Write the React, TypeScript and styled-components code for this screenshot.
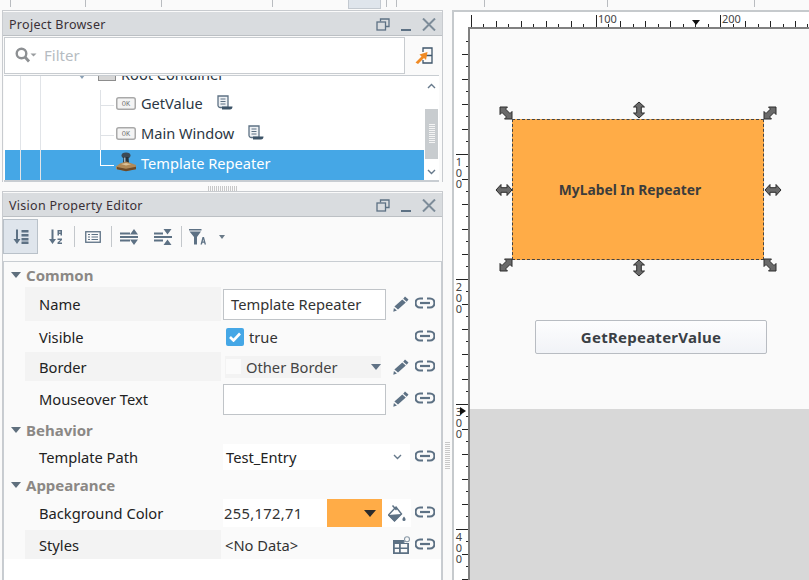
import { ReactNode } from 'react';
import styled, { createGlobalStyle } from 'styled-components';

const GlobalStyle = createGlobalStyle`
  html, body { margin: 0; padding: 0; background: #fafafa; }
  body { font-family: "Noto Sans", "Open Sans", sans-serif; color: #222; }
  * { box-sizing: border-box; }
`;

const SLATE = '#5d7184';

// ---- icons ----
const LinkIcon = () => (
  <svg width="20" height="12" viewBox="0 0 20 12" fill="none" stroke={SLATE} strokeWidth="2.200">
    <path d="M8 1.500H5a4.500 4.500 0 0 0 0 9h3" />
    <path d="M12 1.500h3a4.500 4.500 0 0 1 0 9h-3" />
    <path d="M5 6h10" />
  </svg>
);

const PencilIcon = () => (
  <svg width="16" height="16" viewBox="0 0 16 16" fill={SLATE}>
    <path d="M12 0.500l3.500 3-1.800 2.200-3.500-3zM9.300 3.600l3.500 3-7.800 7-3.600-3z" />
    <path d="M0.300 15.700l.6-3.800 3 2.500z" />
  </svg>
);

const OkIcon = () => (
  <svg width="20" height="13" viewBox="0 0 20 13">
    <rect x="0.750" y="0.750" width="18.500" height="11.500" rx="2" fill="#f4f4f4" stroke="#a9a9a9" strokeWidth="1.500" />
    <text x="10" y="9.300" textAnchor="middle" fontSize="7" fontFamily="Liberation Mono" fill="#777">OK</text>
  </svg>
);

const ScriptIcon = () => (
  <svg width="16" height="16" viewBox="0 0 16 16">
    <path d="M1 1h10v11.500H3.500A2.200 2.200 0 0 1 1 10.500z" fill="#eef1f4" stroke={SLATE} strokeWidth="1.300" />
    <path d="M3.500 4h5M3.500 6.500h5M3.500 9h5" stroke={SLATE} strokeWidth="1" />
    <path d="M5 11.500h10.500c0 2-1 3-2.500 3H5z" fill="#3d5468" />
  </svg>
);

const StampIcon = () => (
  <svg width="21" height="22" viewBox="0 0 21 22">
    <ellipse cx="10" cy="3.500" rx="4.500" ry="3" fill="#3c4a55" />
    <path d="M7.500 5h5l.5 6h-6z" fill="#27323a" />
    <path d="M8 5.500h1.500v5H8z" fill="#9fb1bd" />
    <path d="M4 11.500l6-2 6 2 4 1.500v4l-10 2-10-2v-2.500z" fill="#b08a58" />
    <path d="M1 15l9 1.800 10-2v2.400l-10 2-9-2z" fill="#6b4a28" />
    <path d="M5 12l5-1 5 1.200-5 1.300z" fill="#dcc39a" />
  </svg>
);

const FloatIcon = () => (
  <svg width="14" height="13" viewBox="0 0 14 13" fill="none" stroke={SLATE} strokeWidth="1.300">
    <rect x="1" y="4" width="8.500" height="8" />
    <path d="M4.500 3.500V1h8.500v7.500h-3" />
  </svg>
);

const CloseIcon = () => (
  <svg width="14" height="13" viewBox="0 0 14 13" stroke="#7d8c99" strokeWidth="2">
    <path d="M1 0.500l12 12M13 0.500l-12 12" />
  </svg>
);

const SearchIcon = () => (
  <svg width="22" height="16" viewBox="0 0 22 16" fill="none">
    <circle cx="6.500" cy="6.500" r="4.800" stroke="#8d9093" strokeWidth="2.400" />
    <path d="M10 10l4 4.500" stroke="#8d9093" strokeWidth="2.800" />
    <path d="M15.500 6.500h6l-3 3z" fill="#9a9da0" />
  </svg>
);

const LocateIcon = () => (
  <svg width="18" height="18" viewBox="0 0 18 18" fill="none">
    <path d="M8 5V1h9v15H8v-3M11 8.500h6" stroke="#3f566b" strokeWidth="1.300" />
    <path d="M0.500 15.500L6.500 9.500l-2-2L12.500 5l-1.500 8-2-2-6 6z" fill="#f08a24" />
  </svg>
);

const SortOrderIcon = () => (
  <svg width="16" height="16" viewBox="0 0 16 16" fill={SLATE}>
    <path d="M3 0.500h2V10h2.500l-3.500 5-3.500-5H3z" />
    <path d="M8.500 1h7v2.500h-7zM8.500 5h7v2.500h-7zM8.500 9h7v2.500h-7zM8.500 12.500h7v2.500h-7z" />
  </svg>
);

const SortAlphaIcon = () => (
  <svg width="14" height="16" viewBox="0 0 14 16" fill={SLATE}>
    <path d="M2.500 0.500h2V10H7l-3.500 5L0 10h2.500z" />
    <path d="M8.500 1h4.500v5.500h-1.500V5h-1.500v1.500H8.500zM10 2.400v1.200h1.500V2.400zM8.500 9.500H13v1.500l-2.800 2.500H13V15H8.500v-1.500l2.800-2.500H8.500z" />
  </svg>
);

const DetailsIcon = () => (
  <svg width="16" height="12" viewBox="0 0 16 12" fill="none" stroke={SLATE}>
    <rect x="0.750" y="0.750" width="14.500" height="10.500" strokeWidth="1.300" />
    <path d="M3 3.500h2M3 6h2M3 8.500h2M6.500 3.500H13M6.500 6H13M6.500 8.500H13" strokeWidth="1.200" />
  </svg>
);

const ExpandIcon = () => (
  <svg width="18" height="16" viewBox="0 0 18 16" fill={SLATE}>
    <path d="M0 3.500h10v2H0zM0 7h18v2H0zM0 10.500h10v2H0z" />
    <path d="M14 0l4 5.500h-8zM14 16l-4-5.500h8z" />
  </svg>
);

const CollapseIcon = () => (
  <svg width="18" height="16" viewBox="0 0 18 16" fill={SLATE}>
    <path d="M0 3.500h9v2H0zM0 7h18v2H0zM0 10.500h9v2H0z" />
    <path d="M9.500 0h8l-4 5.500zM13.500 10.500l4 5.500h-8z" />
  </svg>
);

const FilterAlphaIcon = () => (
  <svg width="17" height="16" viewBox="0 0 17 16" fill={SLATE}>
    <path d="M0 0h12.500v1.500H0zM0.500 2.500h11.500L8 8v7.500H5V8z" />
    <path d="M13.500 8h1.500l2 7.500h-1.400l-.4-1.700h-1.800l-.4 1.700H11.500zM13.700 12.600h1.100l-.5-2.400z" />
  </svg>
);

const BucketIcon = () => (
  <svg width="18" height="17" viewBox="0 0 18 17" fill="none">
    <path d="M8 2l5.500 7-7 7L0.500 10z" stroke={SLATE} strokeWidth="1.400" />
    <path d="M0 10l13.500-1-7 7.500z" fill={SLATE} />
    <path d="M4.500 0.500L8.500 5" stroke={SLATE} strokeWidth="1.500" />
    <path d="M16 11.500c.8 1.200 1.600 2 1.600 2.900a1.600 1.600 0 0 1-3.200 0c0-.9.800-1.700 1.600-2.900z" fill={SLATE} />
  </svg>
);

const DatasetIcon = () => (
  <svg width="18" height="18" viewBox="0 0 18 18" fill={SLATE}>
    <path d="M0 4h11v3h5v11H0zM1.800 8v3.500h4.200V8zm6 0v3.500h6.400V8zM1.800 13v3.300h4.200V13zm6 0v3.300h6.400V13z" fillRule="evenodd" />
    <circle cx="14" cy="3.200" r="2.500" fill="#fafafa" stroke="#8a99a7" strokeWidth="1.100" />
    <path d="M12.200 5l-1.500 1.500" stroke="#8a99a7" strokeWidth="1.100" />
  </svg>
);

const Chevron = ({ up }: { up?: boolean }) => (
  <svg width="9" height="6" viewBox="0 0 9 6" fill="none" stroke="#66798b" strokeWidth="1.400">
    <path d={up ? 'M1 5l3.500-3.500L8 5' : 'M1 1l3.500 3.500L8 1'} />
  </svg>
);

const Caret = styled.span<{ $size?: number; $color?: string }>`
  display: inline-block;
  flex: none;
  width: 0;
  height: 0;
  border-left: ${(p) => p.$size ?? 5}px solid transparent;
  border-right: ${(p) => p.$size ?? 5}px solid transparent;
  border-top: ${(p) => (p.$size ?? 5) + 1}px solid ${(p) => p.$color ?? SLATE};
`;

// handles around the selected component
const Handle = ({ kind, x, y }: { kind: 'h' | 'v' | 'd1' | 'd2'; x: number; y: number }) => {
  const straight = kind === 'h' || kind === 'v';
  return (
    <HandleBox $x={x} $y={y}>
      <svg width="18" height="18" viewBox="-9 -9 18 18">
        {straight ? (
          <path
            d="M-8 0L-3 -5.500V-2.300H3V-5.500L8 0 3 5.500V2.300H-3V5.500z"
            fill="#6a6a6a"
            stroke="#2c2c2c"
            strokeWidth="1"
            transform={kind === 'v' ? 'rotate(90)' : undefined}
          />
        ) : (
          <path
            d="M-6 -6H1.500L-0.500 -4 4 0.500 6 -1.500V6H-1.500L0.500 4 -4 -0.500 -6 1.500z"
            fill="#6a6a6a"
            stroke="#2c2c2c"
            strokeWidth="1"
            transform={kind === 'd2' ? 'rotate(90)' : undefined}
          />
        )}
      </svg>
    </HandleBox>
  );
};

// ---- rulers ----
const Hruler = () => {
  const ticks = [];
  for (let k = -10; k < 28; k++) {
    const x = 142 + k * 12.470;
    if (x < 16) continue;
    const major = k % 10 === 0;
    const long = k % 2 === 0;
    ticks.push(<path key={k} d={`M${x} ${major ? 1 : long ? 7 : 10}V13`} stroke="#222" strokeWidth="1" shapeRendering="crispEdges" />);
  }
  return (
    <RulerTop width="355" height="13" viewBox="0 0 355 13">
      {ticks}
      <text x="144" y="9" fontSize="11" fontFamily="Noto Sans" fill="#444">100</text>
      <text x="268" y="9" fontSize="11" fontFamily="Noto Sans" fill="#444">200</text>
      <path d="M238 6h8l-4 5z" fill="#111" />
    </RulerTop>
  );
};

const Vruler = () => {
  const ticks = [];
  for (let k = 1; k < 46; k++) {
    const y = k * 12.500 + 2.300;
    const major = k % 10 === 0;
    const long = k % 2 === 0;
    ticks.push(<path key={k} d={`M${major ? 2 : long ? 8 : 12} ${y}H14`} stroke="#222" strokeWidth="1" shapeRendering="crispEdges" />);
  }
  return (
    <RulerSide width="14" height="553" viewBox="0 0 14 553">
      {ticks}
      {[['1', 127], ['2', 252], ['3', 377], ['4', 502]].map(([d, y]) => (
        <text key={d} textAnchor="middle" fontSize="11" fontFamily="Noto Sans" fill="#444">
          <tspan x="5" y={(y as number) + 11.500}>{d}</tspan>
          <tspan x="5" y={(y as number) + 22.500}>0</tspan>
          <tspan x="5" y={(y as number) + 34}>0</tspan>
        </text>
      ))}
      <path d="M6 380l6 4-6 4z" fill="#111" />
    </RulerSide>
  );
};

// ---- pieces ----
const DockTitle = ({ children }: { children: ReactNode }) => (
  <DockHeader>
    <DockName>{children}</DockName>
    <DockButtons>
      <FloatIcon />
      <MinBar />
      <CloseIcon />
    </DockButtons>
  </DockHeader>
);

const TreeRow = ({ icon, label, script, selected }: { icon: ReactNode; label: string; script?: boolean; selected?: boolean }) => (
  <TreeItem $selected={selected}>
    <Stub $selected={selected} />
    <TreeGlyph>{icon}</TreeGlyph>
    <TreeLabel $selected={selected}>{label}</TreeLabel>
    {script && <ScriptIcon />}
  </TreeItem>
);

const Section = ({ title, height, lift }: { title: string; height: number; lift?: number }) => (
  <SectionRow $h={height} $lift={lift}>
    <Caret $size={5} $color="#5f6f7d" />
    <SectionName>{title}</SectionName>
  </SectionRow>
);

const Prop = ({ name, h, shaded, gap, children, edit, tool }: { name: string; h: number; shaded?: boolean; gap?: number; children?: ReactNode; edit?: boolean; tool?: ReactNode }) => (
  <PropRow $h={h} $gap={gap}>
    <PropName $shaded={shaded}>{name}</PropName>
    <PropValue>{children}</PropValue>
    <PropTool>{edit ? <PencilIcon /> : tool}</PropTool>
    <PropLink><LinkIcon /></PropLink>
  </PropRow>
);

export default function App() {
  return (
    <Page>
      <GlobalStyle />
      <TopStrip>
        <TopTick $w={11} /><TopTick $w={75} /><TopTick $w={76} /><TopTick $w={111} />
        <TopActive />
        <TopTick $w={6} /><TopTick $w={10} /><TopTick $w={88} /><TopTick $w={123} /><TopTick $w={147} />
      </TopStrip>
      <Body>
        <LeftColumn>
          <BrowserPanel>
            <DockTitle>Project Browser</DockTitle>
            <FilterRow>
              <FilterBox>
                <SearchIcon />
                <FilterText>Filter</FilterText>
              </FilterBox>
              <LocateSlot><LocateIcon /></LocateSlot>
            </FilterRow>
            <TreeFrame>
              <TreeRows>
                <GuideLine $x={15} />
                <GuideLine $x={35} />
                <RootRow>
                  <RootCaret $size={3} $color="#8aa0b4" />
                  <RootBox />
                  <RootLabel>Root Container</RootLabel>
                </RootRow>
                <TreeRow icon={<OkIcon />} label="GetValue" script />
                <TreeRow icon={<OkIcon />} label="Main Window" script />
                <TreeRow icon={<StampIcon />} label="Template Repeater" selected />
              </TreeRows>
              <ScrollBar>
                <ScrollArrow $h={20}><Chevron up /></ScrollArrow>
                <ScrollTrack><ScrollThumb><ThumbGrip /></ScrollThumb></ScrollTrack>
                <ScrollArrow $h={16}><Chevron /></ScrollArrow>
              </ScrollBar>
            </TreeFrame>
          </BrowserPanel>
          <HSplit><HGrip /></HSplit>
          <EditorPanel>
            <DockTitle>Vision Property Editor</DockTitle>
            <Toolbar>
              <ToolButton $active $w={35}><SortOrderIcon /></ToolButton>
              <ToolButton $w={35}><SortAlphaIcon /></ToolButton>
              <ToolSep />
              <ToolButton $w={35}><DetailsIcon /></ToolButton>
              <ToolSep />
              <ToolButton $w={34}><ExpandIcon /></ToolButton>
              <ToolButton $w={34}><CollapseIcon /></ToolButton>
              <ToolSep />
              <ToolButton $w={30}><FilterAlphaIcon /></ToolButton>
              <ToolButton $w={20}><Caret $size={3} $color="#6a7a88" /></ToolButton>
            </Toolbar>
            <PropTable>
              <Section title="Common" height={25} />
              <Prop name="Name" h={34} shaded edit>
                <TextField $w={163} $h={31}>Template Repeater</TextField>
              </Prop>
              <Prop name="Visible" h={31}>
                <CheckWrap>
                  <CheckBox>
                    <svg width="12" height="10" viewBox="0 0 12 10" fill="none" stroke="#fff" strokeWidth="2.600"><path d="M1 5l3.500 3.500L11 1.500" /></svg>
                  </CheckBox>
                  true
                </CheckWrap>
              </Prop>
              <Prop name="Border" h={29} shaded edit>
                <BorderSelect>
                  <Swatch />
                  <BorderText>Other Border</BorderText>
                  <Caret $size={5} $color="#5f7184" />
                </BorderSelect>
              </Prop>
              <Prop name="Mouseover Text" h={36} edit>
                <TextField $w={163} $h={31} />
              </Prop>
              <Section title="Behavior" height={27} lift={2} />
              <Prop name="Template Path" h={26}>
                <PathSelect>
                  Test_Entry
                  <Chevron />
                </PathSelect>
              </Prop>
              <Section title="Appearance" height={29} />
              <Prop name="Background Color" h={28}>
                <ColorField>
                  <ColorText>255,172,71</ColorText>
                  <ColorChip><Caret $size={6} $color="#2b2b2b" /></ColorChip>
                  <BucketSlot><BucketIcon /></BucketSlot>
                </ColorField>
              </Prop>
              <Prop name="Styles" h={29} gap={3} shaded tool={<ToolShift><DatasetIcon /></ToolShift>}>
                <NoData>&lt;No Data&gt;</NoData>
              </Prop>
              <TableRest />
            </PropTable>
          </EditorPanel>
        </LeftColumn>
        <VSplit><VGrip /></VSplit>
        <DesignerPanel>
          <Hruler />
          <DesignerBody>
            <Vruler />
            <Stage>
              <Design>
                <Repeater>
                  <RepeaterLabel>MyLabel In Repeater</RepeaterLabel>
                </Repeater>
                <Handle kind="d1" x={27} y={75} />
                <Handle kind="v" x={160} y={72} />
                <Handle kind="d2" x={291} y={75} />
                <Handle kind="h" x={25} y={152} />
                <Handle kind="h" x={294} y={152} />
                <Handle kind="d2" x={27} y={227} />
                <Handle kind="v" x={160} y={230} />
                <Handle kind="d1" x={291} y={227} />
                <ActionButton>GetRepeaterValue</ActionButton>
              </Design>
              <Outside />
            </Stage>
          </DesignerBody>
        </DesignerPanel>
      </Body>
    </Page>
  );
}

// ---- styles ----
const Page = styled.div`
  width: 809px;
  height: 580px;
  overflow: hidden;
  display: flex;
  flex-direction: column;
  background: #fafafa;
`;
const TopStrip = styled.div`
  height: 10px;
  flex: none;
  display: flex;
  align-items: flex-start;
`;
const TopTick = styled.div<{ $w: number }>`
  width: ${(p) => p.$w}px;
  height: 7px;
  border-right: 1px solid #b9bcc0;
`;
const TopActive = styled.div`
  width: 33px;
  height: 9px;
  margin-left: 75px;
  background: #dfe5ec;
  border: 1px solid #c3c9d0;
  border-top: 0;
`;
const Body = styled.div`
  flex: 1;
  min-height: 0;
  display: flex;
  padding-left: 2px;
`;
const LeftColumn = styled.div`
  width: 441px;
  flex: none;
  display: flex;
  flex-direction: column;
`;
const BrowserPanel = styled.div`
  height: 172px;
  flex: none;
  display: flex;
  flex-direction: column;
  border: 1px solid #c8cbcf;
  border-width: 1px 1px 0 1px;
`;
const DockHeader = styled.div`
  height: 24px;
  flex: none;
  display: flex;
  align-items: center;
  justify-content: space-between;
  margin-top: 1px;
  padding: 2px 6px 0 6px;
  background: #d9dcdf;
  border-bottom: 1px solid #bcc0c4;
`;
const DockName = styled.div`
  font-size: 12.500px;
  letter-spacing: 0.280px;
  color: #3a3036;
`;
const DockButtons = styled.div`
  display: flex;
  align-items: center;
  gap: 11px;
`;
const MinBar = styled.div`
  width: 10px;
  height: 2px;
  margin-top: 11px;
  background: ${SLATE};
`;
const FilterRow = styled.div`
  height: 39px;
  flex: none;
  display: flex;
  align-items: center;
  padding-left: 1px;
`;
const FilterBox = styled.div`
  width: 401px;
  height: 37px;
  flex: none;
  display: flex;
  align-items: center;
  gap: 7px;
  padding: 0 0 2px 10px;
  background: #fff;
  border: 1px solid #c8ccd0;
`;
const FilterText = styled.span`
  font-size: 15px;
  color: #b6bcc2;
`;
const LocateSlot = styled.div`
  width: 18px;
  height: 18px;
  flex: none;
  margin-left: 10px;
`;
const TreeFrame = styled.div`
  flex: 1;
  min-height: 0;
  display: flex;
  margin: 0 3px 0 1px;
  padding-left: 1px;
  background: #fff;
  border: 1px solid #c8cdd2;
  border-width: 1px 0 2px 0;
`;
const TreeRows = styled.div`
  position: relative;
  flex: 1;
  min-width: 0;
  overflow: hidden;
  display: flex;
  flex-direction: column;
  justify-content: flex-end;
`;
const GuideLine = styled.div<{ $x: number }>`
  position: absolute;
  top: 0;
  bottom: 0;
  left: ${(p) => p.$x}px;
  width: 1px;
  background: #e1e4e8;
  z-index: 1;
`;
const TreeItem = styled.div<{ $selected?: boolean }>`
  position: relative;
  height: 30px;
  flex: none;
  display: flex;
  align-items: center;
  padding: 0 0 4px 95px;
  background: ${(p) => (p.$selected ? '#45a7e6' : 'transparent')};
`;
const RootRow = styled.div`
  height: 30px;
  flex: none;
  display: flex;
  align-items: center;
  padding: 0 0 4px 74px;
`;
const RootCaret = styled(Caret)`
  margin: 8px 13px 0 0;
`;
const RootBox = styled.div`
  width: 18px;
  height: 13px;
  flex: none;
  margin: 3px 1px 0 0;
  background: #d6d6d6;
  border: 1px solid #8d8d8d;
`;
const Stub = styled.div<{ $selected?: boolean }>`
  width: 14px;
  height: 1px;
  margin-top: 5px;
  background: ${(p) => (p.$selected ? '#fff' : '#dfe2e6')};
  &::before {
    content: '';
    position: absolute;
    left: 95px;
    top: 0;
    height: ${(p) => (p.$selected ? '16px' : '100%')};
    width: 1px;
    background: ${(p) => (p.$selected ? '#fff' : '#dfe2e6')};
  }
`;
const TreeGlyph = styled.div`
  width: 21px;
  margin-left: 2px;
  display: flex;
  align-items: center;
`;
const TreeLabel = styled.span<{ $selected?: boolean }>`
  font-size: 14.600px;
  margin: 0 14px 0 4px;
  white-space: nowrap;
  color: ${(p) => (p.$selected ? '#fff' : '#2b3744')};
`;
const RootLabel = styled(TreeLabel)`
  margin-top: 2px;
`;
const ScrollBar = styled.div`
  width: 15px;
  flex: none;
  display: flex;
  flex-direction: column;
`;
const ScrollArrow = styled.div<{ $h: number }>`
  height: ${(p) => p.$h}px;
  flex: none;
  display: flex;
  align-items: center;
  justify-content: center;
`;
const ScrollTrack = styled.div`
  flex: 1;
  padding-top: 13px;
`;
const ScrollThumb = styled.div`
  height: 50px;
  margin: 0 1px;
  background: #c8cccf;
  display: flex;
  align-items: center;
  justify-content: center;
`;
const ThumbGrip = styled.div`
  width: 6px;
  height: 20px;
  background: repeating-linear-gradient(to bottom, #f4f4f4 0 1px, transparent 1px 2px);
`;
const HSplit = styled.div`
  height: 9px;
  flex: none;
  display: flex;
  justify-content: center;
  align-items: flex-end;
`;
const HGrip = styled.div`
  width: 29px;
  height: 5px;
  background: repeating-linear-gradient(to right, #c8c8c8 0 1px, transparent 1px 2px);
`;
const EditorPanel = styled.div`
  flex: 1;
  min-height: 0;
  display: flex;
  flex-direction: column;
  border: 1px solid #c8cbcf;
  border-width: 1px 1px 0 1px;
`;
const Toolbar = styled.div`
  height: 44px;
  flex: none;
  display: flex;
  align-items: flex-start;
  padding-top: 2px;
`;
const ToolButton = styled.div<{ $active?: boolean; $w: number }>`
  width: ${(p) => p.$w}px;
  height: 35px;
  flex: none;
  display: flex;
  align-items: center;
  justify-content: center;
  background: ${(p) => (p.$active ? '#dfe5ec' : 'transparent')};
  border: 1px solid ${(p) => (p.$active ? '#b9c1c9' : 'transparent')};
`;
const ToolSep = styled.div`
  width: 1px;
  height: 21px;
  flex: none;
  margin: 7px 0 0 1px;
  background: #c3c7cb;
`;
const PropTable = styled.div`
  flex: 1;
  min-height: 0;
  display: flex;
  flex-direction: column;
  border: 1px solid #c8cdd2;
  border-width: 1px 1px 0 1px;
`;
const SectionRow = styled.div<{ $h: number; $lift?: number }>`
  height: ${(p) => p.$h}px;
  flex: none;
  display: flex;
  align-items: center;
  gap: 5px;
  padding: 0 0 ${(p) => p.$lift ?? 0}px 7px;
`;
const SectionName = styled.span`
  font-size: 15px;
  font-weight: 700;
  color: #8b8885;
`;
const PropRow = styled.div<{ $h: number; $gap?: number }>`
  height: ${(p) => p.$h}px;
  flex: none;
  display: flex;
  align-items: stretch;
  margin-top: ${(p) => p.$gap ?? 0}px;
  padding-left: 21px;
`;
const PropName = styled.div<{ $shaded?: boolean }>`
  width: 196px;
  flex: none;
  display: flex;
  align-items: center;
  padding-left: 14px;
  font-size: 14.700px;
  color: #222;
  background: ${(p) => (p.$shaded ? '#f3f3f3' : 'transparent')};
`;
const PropValue = styled.div`
  width: 167px;
  flex: none;
  display: flex;
  align-items: center;
  padding-left: 2px;
  font-size: 14.700px;
`;
const PropTool = styled.div`
  width: 25px;
  flex: none;
  display: flex;
  align-items: center;
  justify-content: center;
`;
const ToolShift = styled.div`
  display: flex;
  margin-left: 3px;
`;
const PropLink = styled.div`
  flex: 1;
  display: flex;
  align-items: center;
  padding: 0 0 2px 2px;
`;
const TextField = styled.div<{ $w: number; $h: number }>`
  width: ${(p) => p.$w}px;
  height: ${(p) => p.$h}px;
  display: flex;
  align-items: center;
  padding-left: 7px;
  background: #fff;
  border: 1px solid #c0c4c8;
  font-size: 14.700px;
  color: #333;
`;
const CheckWrap = styled.div`
  display: flex;
  align-items: center;
  gap: 5px;
  padding-left: 3px;
  color: #333;
`;
const CheckBox = styled.div`
  width: 18px;
  height: 18px;
  border-radius: 2px;
  background: #45a7e6;
  display: flex;
  align-items: center;
  justify-content: center;
`;
const BorderSelect = styled.div`
  width: 156px;
  height: 22px;
  display: flex;
  align-items: center;
  margin-left: 2px;
  padding-left: 1px;
  background: #f3f3f3;
`;
const Swatch = styled.div`
  width: 15px;
  height: 15px;
  background: #fbfbfb;
`;
const BorderText = styled.span`
  flex: 1;
  padding-left: 5px;
  color: #444;
`;
const PathSelect = styled.div`
  width: 187px;
  height: 26px;
  flex: none;
  display: flex;
  align-items: center;
  justify-content: space-between;
  padding: 0 8px 0 3px;
  background: #fff;
  color: #222;
  position: relative;
  z-index: 1;
`;
const ColorField = styled.div`
  height: 28px;
  flex: none;
  display: flex;
  align-items: stretch;
  position: relative;
  z-index: 1;
`;
const ColorText = styled.div`
  width: 104px;
  display: flex;
  align-items: center;
  padding-left: 1px;
  background: #fff;
  color: #333;
  letter-spacing: 0.350px;
`;
const ColorChip = styled.div`
  width: 55px;
  display: flex;
  align-items: center;
  justify-content: flex-end;
  padding-right: 6px;
  background: #ffac47;
`;
const BucketSlot = styled.div`
  width: 29px;
  display: flex;
  align-items: center;
  justify-content: center;
  background: #fff;
`;
const NoData = styled.span`
  padding-left: 2px;
  color: #333;
`;
const TableRest = styled.div`
  flex: 1;
  background: #fff;
`;
const VSplit = styled.div`
  width: 9px;
  flex: none;
  display: flex;
  align-items: center;
  justify-content: center;
  padding-top: 322px;
`;
const VGrip = styled.div`
  width: 5px;
  height: 28px;
  background: repeating-linear-gradient(to bottom, #c8c8c8 0 1px, transparent 1px 2px);
`;
const DesignerPanel = styled.div`
  flex: 1;
  min-width: 0;
  display: flex;
  flex-direction: column;
  background: #fff;
  border: 2px solid #c6cacd;
  border-width: 2px 0 0 2px;
  padding-top: 2px;
`;
const RulerTop = styled.svg`
  display: block;
  flex: none;
  overflow: visible;
`;
const DesignerBody = styled.div`
  flex: 1;
  min-height: 0;
  display: flex;
`;
const RulerSide = styled.svg`
  display: block;
  flex: none;
`;
const Stage = styled.div`
  flex: 1;
  min-width: 0;
  display: flex;
  flex-direction: column;
  border-top: 2px solid #808080;
  border-left: 2px solid #808080;
`;
const Design = styled.div`
  position: relative;
  height: 380px;
  flex: none;
  background: #fafafa;
`;
const Outside = styled.div`
  flex: 1;
  background: #d8d8d8;
`;
const Repeater = styled.div`
  position: absolute;
  left: 42px;
  top: 90px;
  width: 252px;
  height: 141px;
  display: flex;
  align-items: center;
  justify-content: center;
  padding-right: 16px;
  background: #ffac47;
  border: 1px dashed #444;
`;
const RepeaterLabel = styled.span`
  font-size: 13.800px;
  font-weight: 700;
  color: #3c3c3c;
`;
const HandleBox = styled.div<{ $x: number; $y: number }>`
  position: absolute;
  left: ${(p) => p.$x}px;
  top: ${(p) => p.$y}px;
  width: 18px;
  height: 18px;
`;
const ActionButton = styled.div`
  position: absolute;
  left: 65px;
  top: 291px;
  width: 232px;
  height: 34px;
  display: flex;
  align-items: center;
  justify-content: center;
  font-size: 15px;
  font-weight: 700;
  color: #3a3f45;
  letter-spacing: 0.250px;
  background: linear-gradient(to bottom, #fdfdfe, #f1f3f7);
  border: 1px solid #b8bcc2;
  border-radius: 2px;
`;
